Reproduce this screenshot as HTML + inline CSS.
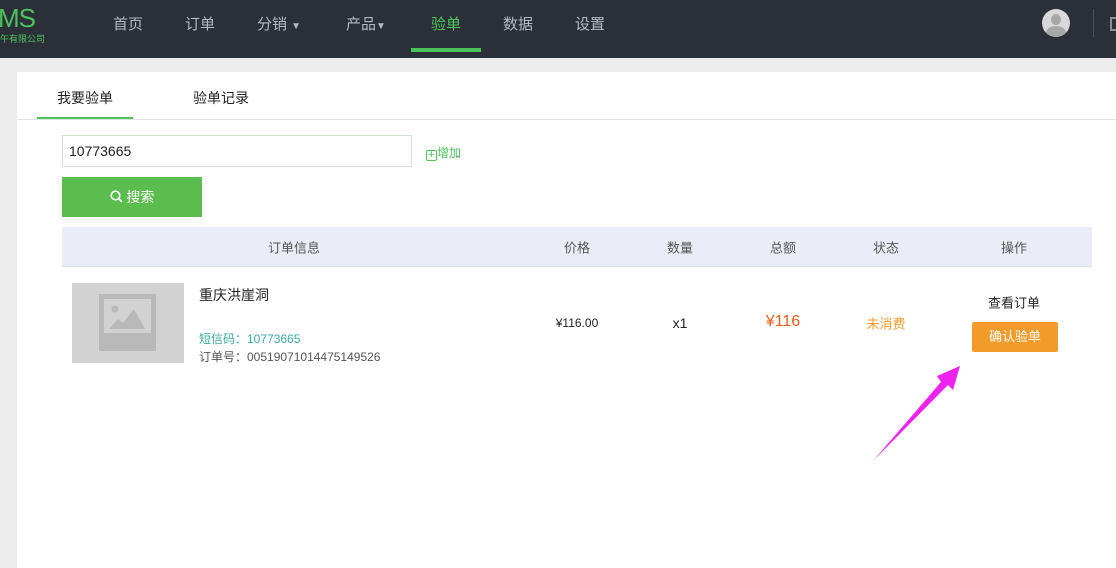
<!DOCTYPE html>
<html><head><meta charset="utf-8"><style>
*{margin:0;padding:0;box-sizing:border-box}
body{width:1116px;height:568px;overflow:hidden;background:#ececec;font-family:"Liberation Sans","Noto Sans CJK SC",sans-serif;position:relative;font-size:13px;color:#333}
.hd{position:absolute;left:0;top:0;width:1116px;height:58px;background:#2b3038}
.nav{position:absolute;top:13px;font-size:15px;color:#b4bac4}
.abs{position:absolute}
.main{position:absolute;left:17px;top:72px;width:1099px;height:496px;background:#fff}
.th{position:absolute;top:247px;font-size:13px;color:#555;transform:translate(-50%,-50%)}
.c{position:absolute;transform:translate(-50%,-50%);white-space:nowrap}
</style></head><body>
<div class="hd">
 <div class="abs" style="left:-2px;top:3px;font-size:26px;color:#4cc35a;letter-spacing:-1px">MS</div>
 <div class="abs" style="left:0;top:32px;font-size:9px;color:#4cc35a">午有限公司</div>
 <div class="nav" style="left:113px">首页</div>
 <div class="nav" style="left:185px">订单</div>
 <div class="nav" style="left:257px">分销 <span style="font-size:10px">▼</span></div>
 <div class="nav" style="left:346px">产品<span style="font-size:10px">▼</span></div>
 <div class="nav" style="left:431px;color:#4cc35a">验单</div>
 <div class="abs" style="left:411px;top:48px;width:70px;height:4px;background:#4cc35a"></div>
 <div class="nav" style="left:503px">数据</div>
 <div class="nav" style="left:575px">设置</div>
 <div class="abs" style="left:1042px;top:9px;width:28px;height:28px;border-radius:50%;background:#d9d9d9;overflow:hidden">
  <div class="abs" style="left:9px;top:5px;width:10px;height:11px;border-radius:50%;background:#a8a8a8"></div>
  <div class="abs" style="left:4px;top:17px;width:20px;height:14px;border-radius:50% 50% 0 0;background:#a8a8a8"></div>
 </div>
 <div class="abs" style="left:1093px;top:9px;width:1px;height:28px;background:#4a505a"></div>
 <div class="abs" style="left:1110px;top:17px;width:10px;height:14px;border:2px solid #8a9099"></div>
</div>
<div class="main">
 <div class="abs" style="left:40px;top:16px;font-size:14px;color:#222">我要验单</div>
 <div class="abs" style="left:20px;top:45px;width:96px;height:3px;background:#4cc35a"></div>
 <div class="abs" style="left:176px;top:16px;font-size:14px;color:#222">验单记录</div>
 <div class="abs" style="left:0;top:47px;width:1099px;height:1px;background:#e3e3e3"></div>
 <div class="abs" style="left:45px;top:63px;width:350px;height:32px;border:1px solid #d3e3d3;padding:7px 6px;font-size:14px;color:#222">10773665</div>
 <div class="abs" style="left:409px;top:72px;font-size:12px;color:#4cc35a"><span style="display:inline-block;width:11px;height:11px;border:1px solid #4cc35a;border-radius:2px;font-size:11px;line-height:9px;text-align:center;vertical-align:-1px">+</span>增加</div>
 <div class="abs" style="left:45px;top:105px;width:140px;height:40px;background:#5bbd4e;color:#fff;font-size:14px;text-align:center;line-height:40px">
  <svg width="13" height="13" viewBox="0 0 13 13" style="vertical-align:-1px"><circle cx="5.5" cy="5.5" r="4.3" fill="none" stroke="#fff" stroke-width="1.6"/><path d="M8.6 8.6L12 12" stroke="#fff" stroke-width="1.6"/></svg> 搜索</div>
 <div class="abs" style="left:45px;top:155px;width:1030px;height:40px;background:#eaedf7;border-bottom:1px solid #dde1ea"></div>
 <div class="abs" style="left:55px;top:211px;width:112px;height:80px;background:#d2d2d2">
  <div class="abs" style="left:27px;top:11px;width:57px;height:57px;background:#b9b9b9"></div>
  <div class="abs" style="left:32px;top:16px;width:47px;height:34px;background:#d2d2d2"></div>
  <svg class="abs" style="left:32px;top:16px" width="47" height="34"><circle cx="11" cy="10" r="3.5" fill="#b9b9b9"/><path d="M5 30L14 20L19 24L30 10L41 30Z" fill="#b9b9b9"/></svg>
 </div>
 <div class="abs" style="left:182px;top:213px;font-size:14px;color:#222">重庆洪崖洞</div>
 <div class="abs" style="left:182px;top:258px;font-size:12px;color:#3aaba0">短信码：10773665</div>
 <div class="abs" style="left:182px;top:276px;font-size:12px;color:#555">订单号：00519071014475149526</div>
</div>
<div class="th" style="left:294px">订单信息</div>
<div class="th" style="left:577px">价格</div>
<div class="th" style="left:680px">数量</div>
<div class="th" style="left:783px">总额</div>
<div class="th" style="left:886px">状态</div>
<div class="th" style="left:1014px">操作</div>
<div class="c" style="left:577px;top:323px;font-size:12px;color:#222">¥116.00</div>
<div class="c" style="left:680px;top:323px;font-size:14px;color:#222">x1</div>
<div class="c" style="left:783px;top:322px;font-size:16px;color:#f05a1a">¥116</div>
<div class="c" style="left:886px;top:323px;font-size:13px;color:#f59a2a">未消费</div>
<div class="c" style="left:1014px;top:302px;font-size:13px;color:#222">查看订单</div>
<div class="abs" style="left:972px;top:322px;width:86px;height:30px;background:#f39b2b;border-radius:2px;color:#fff;font-size:13px;text-align:center;line-height:30px">确认验单</div>
<svg class="abs" style="left:0;top:0" width="1116" height="568"><polygon points="873,461 941,382 937,376 960,366 953,390 948,385" fill="#ee22ee"/></svg>
</body></html>
